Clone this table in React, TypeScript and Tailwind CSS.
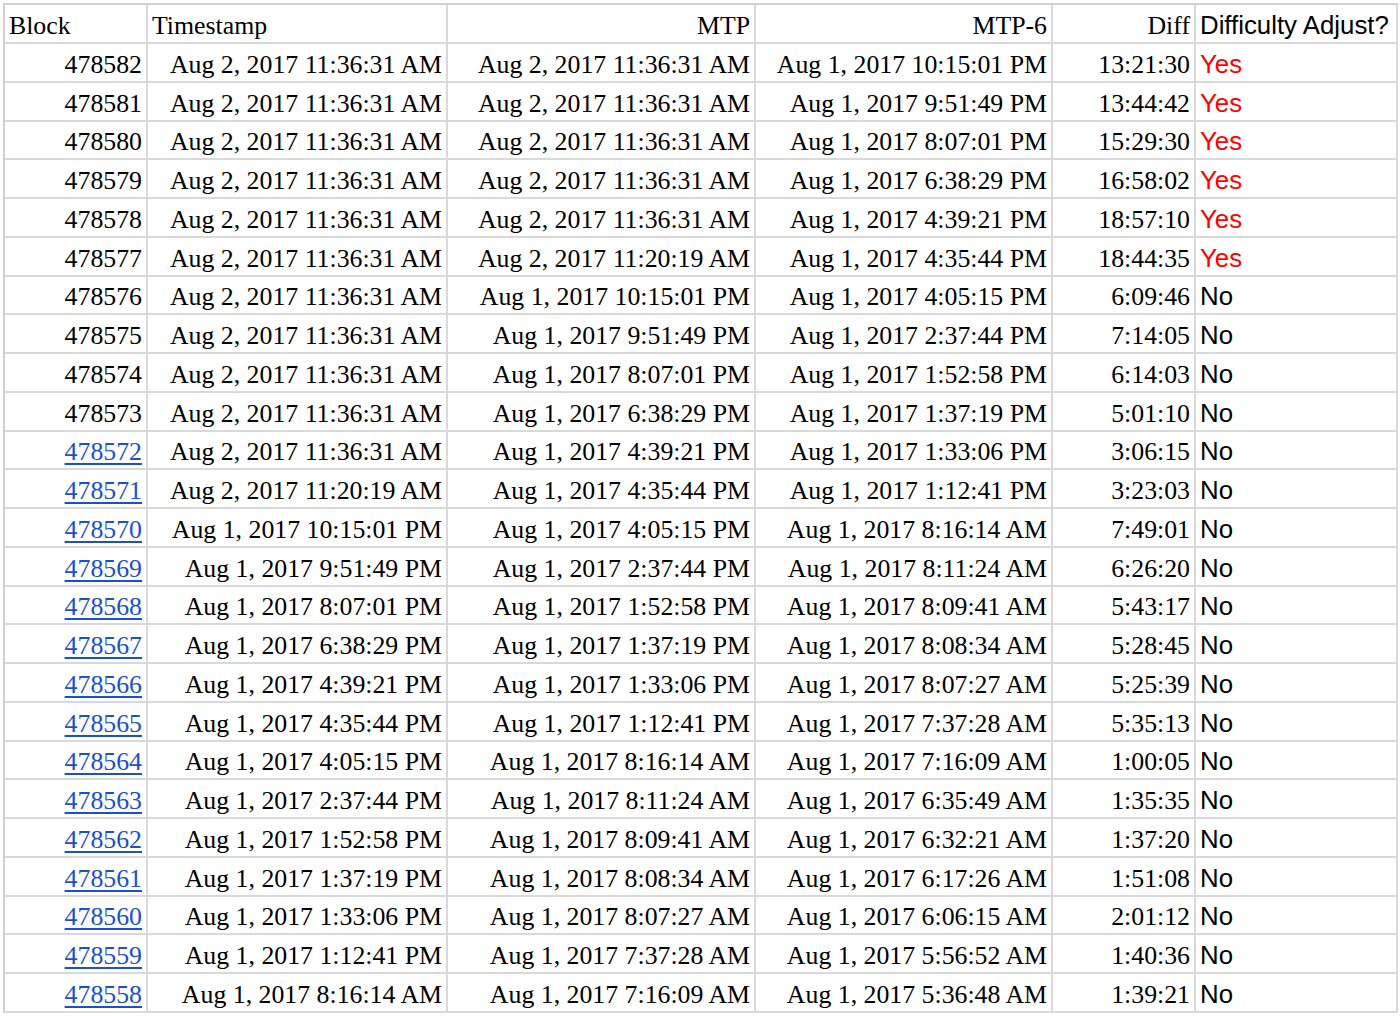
import React from "react";

type Row = [string, string, string, string, string, string];

const T = "Aug 2, 2017 11:36:31 AM";
const rows: Row[] = [
  ["478582", T, T, "Aug 1, 2017 10:15:01 PM", "13:21:30", "Yes"],
  ["478581", T, T, "Aug 1, 2017 9:51:49 PM", "13:44:42", "Yes"],
  ["478580", T, T, "Aug 1, 2017 8:07:01 PM", "15:29:30", "Yes"],
  ["478579", T, T, "Aug 1, 2017 6:38:29 PM", "16:58:02", "Yes"],
  ["478578", T, T, "Aug 1, 2017 4:39:21 PM", "18:57:10", "Yes"],
  ["478577", T, "Aug 2, 2017 11:20:19 AM", "Aug 1, 2017 4:35:44 PM", "18:44:35", "Yes"],
  ["478576", T, "Aug 1, 2017 10:15:01 PM", "Aug 1, 2017 4:05:15 PM", "6:09:46", "No"],
  ["478575", T, "Aug 1, 2017 9:51:49 PM", "Aug 1, 2017 2:37:44 PM", "7:14:05", "No"],
  ["478574", T, "Aug 1, 2017 8:07:01 PM", "Aug 1, 2017 1:52:58 PM", "6:14:03", "No"],
  ["478573", T, "Aug 1, 2017 6:38:29 PM", "Aug 1, 2017 1:37:19 PM", "5:01:10", "No"],
  ["478572", T, "Aug 1, 2017 4:39:21 PM", "Aug 1, 2017 1:33:06 PM", "3:06:15", "No"],
  ["478571", "Aug 2, 2017 11:20:19 AM", "Aug 1, 2017 4:35:44 PM", "Aug 1, 2017 1:12:41 PM", "3:23:03", "No"],
  ["478570", "Aug 1, 2017 10:15:01 PM", "Aug 1, 2017 4:05:15 PM", "Aug 1, 2017 8:16:14 AM", "7:49:01", "No"],
  ["478569", "Aug 1, 2017 9:51:49 PM", "Aug 1, 2017 2:37:44 PM", "Aug 1, 2017 8:11:24 AM", "6:26:20", "No"],
  ["478568", "Aug 1, 2017 8:07:01 PM", "Aug 1, 2017 1:52:58 PM", "Aug 1, 2017 8:09:41 AM", "5:43:17", "No"],
  ["478567", "Aug 1, 2017 6:38:29 PM", "Aug 1, 2017 1:37:19 PM", "Aug 1, 2017 8:08:34 AM", "5:28:45", "No"],
  ["478566", "Aug 1, 2017 4:39:21 PM", "Aug 1, 2017 1:33:06 PM", "Aug 1, 2017 8:07:27 AM", "5:25:39", "No"],
  ["478565", "Aug 1, 2017 4:35:44 PM", "Aug 1, 2017 1:12:41 PM", "Aug 1, 2017 7:37:28 AM", "5:35:13", "No"],
  ["478564", "Aug 1, 2017 4:05:15 PM", "Aug 1, 2017 8:16:14 AM", "Aug 1, 2017 7:16:09 AM", "1:00:05", "No"],
  ["478563", "Aug 1, 2017 2:37:44 PM", "Aug 1, 2017 8:11:24 AM", "Aug 1, 2017 6:35:49 AM", "1:35:35", "No"],
  ["478562", "Aug 1, 2017 1:52:58 PM", "Aug 1, 2017 8:09:41 AM", "Aug 1, 2017 6:32:21 AM", "1:37:20", "No"],
  ["478561", "Aug 1, 2017 1:37:19 PM", "Aug 1, 2017 8:08:34 AM", "Aug 1, 2017 6:17:26 AM", "1:51:08", "No"],
  ["478560", "Aug 1, 2017 1:33:06 PM", "Aug 1, 2017 8:07:27 AM", "Aug 1, 2017 6:06:15 AM", "2:01:12", "No"],
  ["478559", "Aug 1, 2017 1:12:41 PM", "Aug 1, 2017 7:37:28 AM", "Aug 1, 2017 5:56:52 AM", "1:40:36", "No"],
  ["478558", "Aug 1, 2017 8:16:14 AM", "Aug 1, 2017 7:16:09 AM", "Aug 1, 2017 5:36:48 AM", "1:39:21", "No"],
];

const serif = "font-['Liberation_Serif','Times_New_Roman',serif]";
const sans = "font-['Liberation_Sans',Arial,sans-serif]";
const cell =
  "flex items-center border-r-2 border-b-2 border-[#d9d9d9] px-[4px] pt-[5px] text-[25.8px] leading-none whitespace-nowrap overflow-hidden";

export default function App() {
  return (
    <div className="w-[1400px] h-[1016px] bg-white overflow-hidden pl-[3px] pt-[3px]">
      <div className="grid grid-cols-[143px_300px_308px_297px_143px_202px] border-l-2 border-t-2 border-[#d0d0d0] w-max text-black">
        <div className={`${cell} ${serif} h-[39px] justify-start`}>Block</div>
        <div className={`${cell} ${serif} h-[39px] justify-start`}>Timestamp</div>
        <div className={`${cell} ${serif} h-[39px] justify-end`}>MTP</div>
        <div className={`${cell} ${serif} h-[39px] justify-end`}>MTP-6</div>
        <div className={`${cell} ${serif} h-[39px] justify-end`}>Diff</div>
        <div className={`${cell} ${sans} h-[39px] justify-start`}>Difficulty Adjust?</div>
        {rows.map((r, i) => {
          const link = i >= 10;
          return (
            <React.Fragment key={r[0]}>
              <div className={`${cell} ${serif} h-[38.75px] justify-end`}>
                {link ? (
                  <span className="text-[#1a4fd0] underline decoration-[1.5px] underline-offset-[3px]">{r[0]}</span>
                ) : (
                  r[0]
                )}
              </div>
              <div className={`${cell} ${serif} h-[38.75px] justify-end`}>{r[1]}</div>
              <div className={`${cell} ${serif} h-[38.75px] justify-end`}>{r[2]}</div>
              <div className={`${cell} ${serif} h-[38.75px] justify-end`}>{r[3]}</div>
              <div className={`${cell} ${serif} h-[38.75px] justify-end`}>{r[4]}</div>
              <div
                className={`${cell} ${sans} h-[38.75px] justify-start ${
                  r[5] === "Yes" ? "text-[#ff0000]" : "text-black"
                }`}
              >
                {r[5]}
              </div>
            </React.Fragment>
          );
        })}
      </div>
    </div>
  );
}
